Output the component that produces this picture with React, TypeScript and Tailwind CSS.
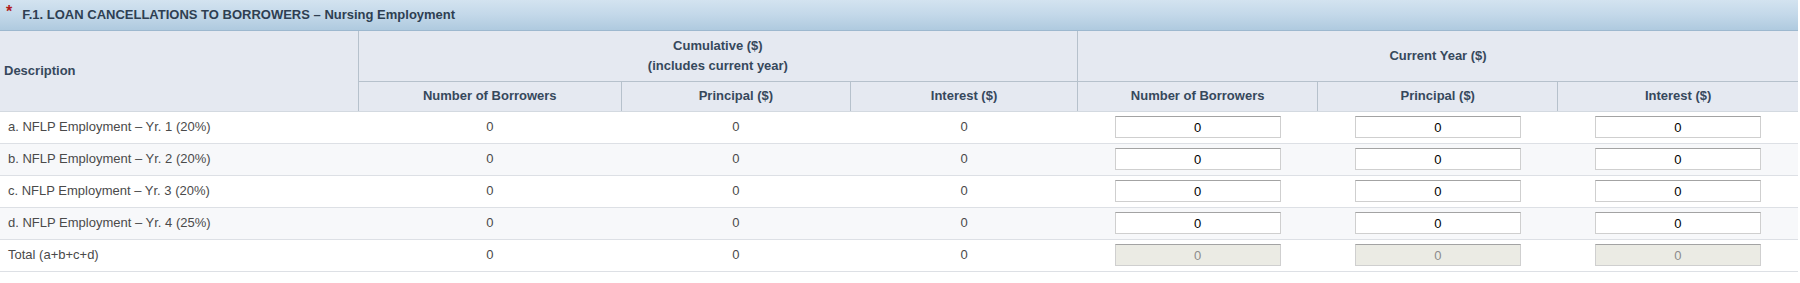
import React from 'react';

// Column widths taken from the form grid
const cols = [358, 263, 229, 227, 240, 240, 240];

const rows = [
  { label: 'a. NFLP Employment – Yr. 1 (20%)' },
  { label: 'b. NFLP Employment – Yr. 2 (20%)' },
  { label: 'c. NFLP Employment – Yr. 3 (20%)' },
  { label: 'd. NFLP Employment – Yr. 4 (25%)' },
  { label: 'Total (a+b+c+d)', total: true },
];

const NumInput: React.FC<{ disabled?: boolean }> = ({ disabled }) => (
  <input
    type="text"
    defaultValue="0"
    disabled={disabled}
    className={`w-[166px] h-[22px] border border-[#cfcfcf] border-t-[#a3a3a3] text-center text-[13px] outline-none ${
      disabled ? 'bg-[#ebebe4] text-[#8c8c8c]' : 'bg-white text-black'
    }`}
  />
);

export default function App() {
  return (
    <div className="w-[1798px] bg-white font-['Liberation_Sans',Arial,sans-serif]">
      {/* Section title bar */}
      <div className="h-[31px] flex items-center gap-[10px] pl-[6px] border-b border-[#9db8cf] bg-gradient-to-b from-[#d3e3f0] via-[#c3d8e9] to-[#afcadf]">
        <span className="text-[#b01c1c] text-[16px] font-bold leading-none -mt-[6px]">*</span>
        <span className="text-[13px] font-bold text-[#2e3f52]">F.1. LOAN CANCELLATIONS TO BORROWERS – Nursing Employment</span>
      </div>

      <table className="table-fixed border-collapse w-full">
        <colgroup>
          {cols.map((w, i) => (
            <col key={i} style={{ width: w }} />
          ))}
        </colgroup>
        <thead className="bg-[#e5e9f1] text-[13px] font-bold text-[#36485c]">
          <tr className="h-[50px]">
            <th rowSpan={2} className="text-left pl-[4px] font-bold border-b border-[#d3d9e0]">Description</th>
            <th colSpan={3} className="font-bold leading-[20px] border-l border-b border-[#b6c1cc]">
              Cumulative ($)
              <br />
              (includes current year)
            </th>
            <th colSpan={3} className="font-bold border-l border-b border-[#b6c1cc]">Current Year ($)</th>
          </tr>
          <tr className="h-[30px]">
            {['Number of Borrowers', 'Principal ($)', 'Interest ($)', 'Number of Borrowers', 'Principal ($)', 'Interest ($)'].map((h, i) => (
              <th key={i} className="font-bold border-l border-b border-l-[#b6c1cc] border-b-[#d3d9e0]">
                {h}
              </th>
            ))}
          </tr>
        </thead>
        <tbody className="text-[13px] text-[#4a4a4a]">
          {rows.map((r, i) => (
            <tr key={i} className={`h-[32px] border-b border-[#dde0e5] ${i % 2 === 1 ? 'bg-[#f7f8fa]' : 'bg-white'}`}>
              <td className="pl-[8px]">{r.label}</td>
              <td className="text-center">0</td>
              <td className="text-center">0</td>
              <td className="text-center">0</td>
              {[0, 1, 2].map((k) => (
                <td key={k} className="text-center">
                  <NumInput disabled={r.total} />
                </td>
              ))}
            </tr>
          ))}
        </tbody>
      </table>
    </div>
  );
}
